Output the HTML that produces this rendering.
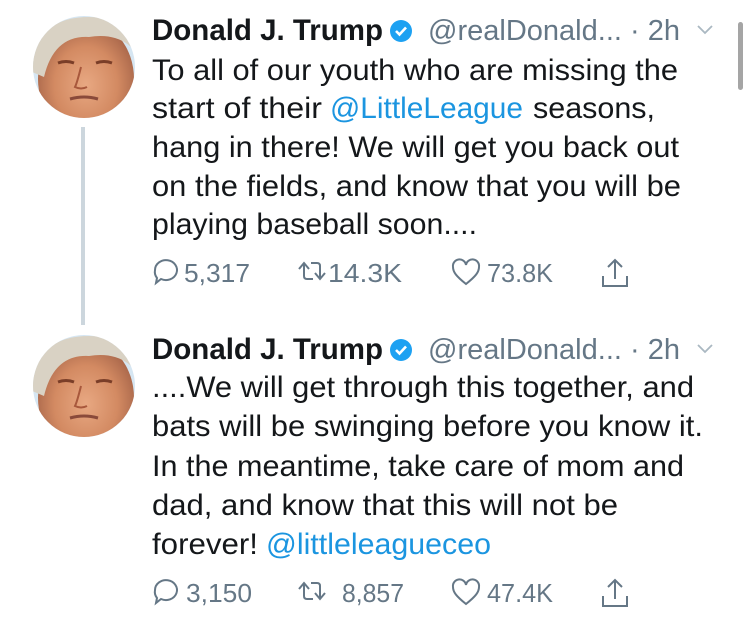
<!DOCTYPE html>
<html><head><meta charset="utf-8"><style>
html,body{margin:0;padding:0;background:#fff;}
svg{display:block;}
text{font-family:"Liberation Sans",Arial,sans-serif;}
</style></head><body>
<svg width="750" height="618" viewBox="0 0 750 618" xmlns="http://www.w3.org/2000/svg">
<defs>
<radialGradient id="face" cx="50%" cy="55%" r="55%">
<stop offset="0" stop-color="#e8a882"/><stop offset="0.6" stop-color="#d38a62"/><stop offset="1" stop-color="#a8664a"/>
</radialGradient>
<clipPath id="c1"><circle cx="84" cy="67" r="51"/></clipPath>
<clipPath id="c2"><circle cx="84" cy="386" r="51"/></clipPath>
<g id="av">
<rect x="-60" y="-60" width="120" height="120" fill="#d6e6f2"/>
<ellipse cx="2" cy="12" rx="48" ry="58" fill="url(#face)"/>
<path d="M-52 5 Q-50 -50 5 -50 Q45 -50 52 -15 Q35 -35 5 -30 Q-30 -32 -40 10Z" fill="#d9d2c4"/>
<path d="M-26 -4 q8 -3 16 0 M12 -4 q8 -3 16 0" stroke="#7a3e28" stroke-width="3" fill="none"/>
<path d="M-3 0 q-4 16 -6 20 q6 3 12 0" stroke="#a8583c" stroke-width="2" fill="none"/>
<path d="M-14 32 q14 -4 28 0" stroke="#8a4a3a" stroke-width="3" fill="none"/>
</g>
<g id="badge"><circle r="11" fill="#1da1f2"/><path d="M-5 0 l3.5 3.5 l6.5 -7" stroke="#fff" stroke-width="2.6" fill="none"/></g>
<g id="cm"><path d="M2 11 a11 10 0 1 1 6 9 l-5 4 l1 -5 a10 10 0 0 1 -2 -8z" fill="none" stroke="#657786" stroke-width="2"/></g>
<g id="rt" fill="none" stroke="#657786" stroke-width="2"><path d="M0 7 l5 -6 l5 6 M5 1 v13 q0 3 3 3 h6"/><path d="M12 1 h6 q3 0 3 3 v13 M16 11 l5 6 l5 -6"/></g>
<g id="ht"><path d="M13 24 C3 16 0 12 0 7 A6.5 6.5 0 0 1 13 5 A6.5 6.5 0 0 1 26 7 C26 12 23 16 13 24Z" fill="none" stroke="#657786" stroke-width="2"/></g>
<g id="sh" fill="none" stroke="#657786" stroke-width="2"><path d="M13 0 v19 M6 7 l7 -7 l7 7 M1 16 v10 h24 v-10"/></g>
</defs>
<g clip-path="url(#c1)"><use href="#av" x="84" y="67"/></g>
<g clip-path="url(#c2)"><use href="#av" x="84" y="386"/></g>
<rect x="81" y="127" width="4" height="198" fill="#ccd6dd"/>
<rect x="738" y="22" width="5" height="68" rx="2.5" fill="#a5a5a5"/>

<text x="152" y="40" font-size="30" font-weight="bold" fill="#14171a" textLength="231" lengthAdjust="spacingAndGlyphs">Donald J. Trump</text>
<use href="#badge" x="401" y="31"/>
<text x="428" y="40" font-size="29" fill="#657786" textLength="252" lengthAdjust="spacingAndGlyphs">@realDonald... · 2h</text>
<path d="M698 26 l7 7 l7 -7" fill="none" stroke="#aab8c2" stroke-width="1.8"/>
<g font-size="30" fill="#14171a">
<text x="152" y="80" textLength="526" lengthAdjust="spacingAndGlyphs">To all of our youth who are missing the</text>
<text x="152" y="118" textLength="170" lengthAdjust="spacingAndGlyphs">start of their</text>
<text x="330" y="118" fill="#1b95e0" textLength="193" lengthAdjust="spacingAndGlyphs">@LittleLeague</text>
<text x="533" y="118" textLength="122" lengthAdjust="spacingAndGlyphs">seasons,</text>
<text x="152" y="157" textLength="527" lengthAdjust="spacingAndGlyphs">hang in there! We will get you back out</text>
<text x="152" y="196" textLength="529" lengthAdjust="spacingAndGlyphs">on the fields, and know that you will be</text>
<text x="152" y="234" textLength="325" lengthAdjust="spacingAndGlyphs">playing baseball soon....</text>
</g>
<use href="#cm" x="153" y="259"/>
<use href="#rt" x="299" y="262"/>
<use href="#ht" x="453" y="260"/>
<use href="#sh" x="602" y="260"/>
<g font-size="26" fill="#657786">
<text x="184" y="282" textLength="66" lengthAdjust="spacingAndGlyphs">5,317</text>
<text x="328" y="282" textLength="74" lengthAdjust="spacingAndGlyphs">14.3K</text>
<text x="487" y="282" textLength="66" lengthAdjust="spacingAndGlyphs">73.8K</text>
</g>

<text x="152" y="359" font-size="30" font-weight="bold" fill="#14171a" textLength="231" lengthAdjust="spacingAndGlyphs">Donald J. Trump</text>
<use href="#badge" x="401" y="350"/>
<text x="428" y="359" font-size="29" fill="#657786" textLength="252" lengthAdjust="spacingAndGlyphs">@realDonald... · 2h</text>
<path d="M698 345 l7 7 l7 -7" fill="none" stroke="#aab8c2" stroke-width="1.8"/>
<g font-size="30" fill="#14171a">
<text x="152" y="397" textLength="542" lengthAdjust="spacingAndGlyphs">....We will get through this together, and</text>
<text x="152" y="436" textLength="551" lengthAdjust="spacingAndGlyphs">bats will be swinging before you know it.</text>
<text x="152" y="476" textLength="532" lengthAdjust="spacingAndGlyphs">In the meantime, take care of mom and</text>
<text x="152" y="515" textLength="466" lengthAdjust="spacingAndGlyphs">dad, and know that this will not be</text>
<text x="152" y="554" textLength="106" lengthAdjust="spacingAndGlyphs">forever!</text>
<text x="266" y="554" fill="#1b95e0" textLength="225" lengthAdjust="spacingAndGlyphs">@littleleagueceo</text>
</g>
<use href="#cm" x="153" y="579"/>
<use href="#rt" x="299" y="582"/>
<use href="#ht" x="453" y="580"/>
<use href="#sh" x="602" y="580"/>
<g font-size="26" fill="#657786">
<text x="186" y="602" textLength="66" lengthAdjust="spacingAndGlyphs">3,150</text>
<text x="342" y="602" textLength="62" lengthAdjust="spacingAndGlyphs">8,857</text>
<text x="487" y="602" textLength="66" lengthAdjust="spacingAndGlyphs">47.4K</text>
</g>
</svg>
</body></html>
